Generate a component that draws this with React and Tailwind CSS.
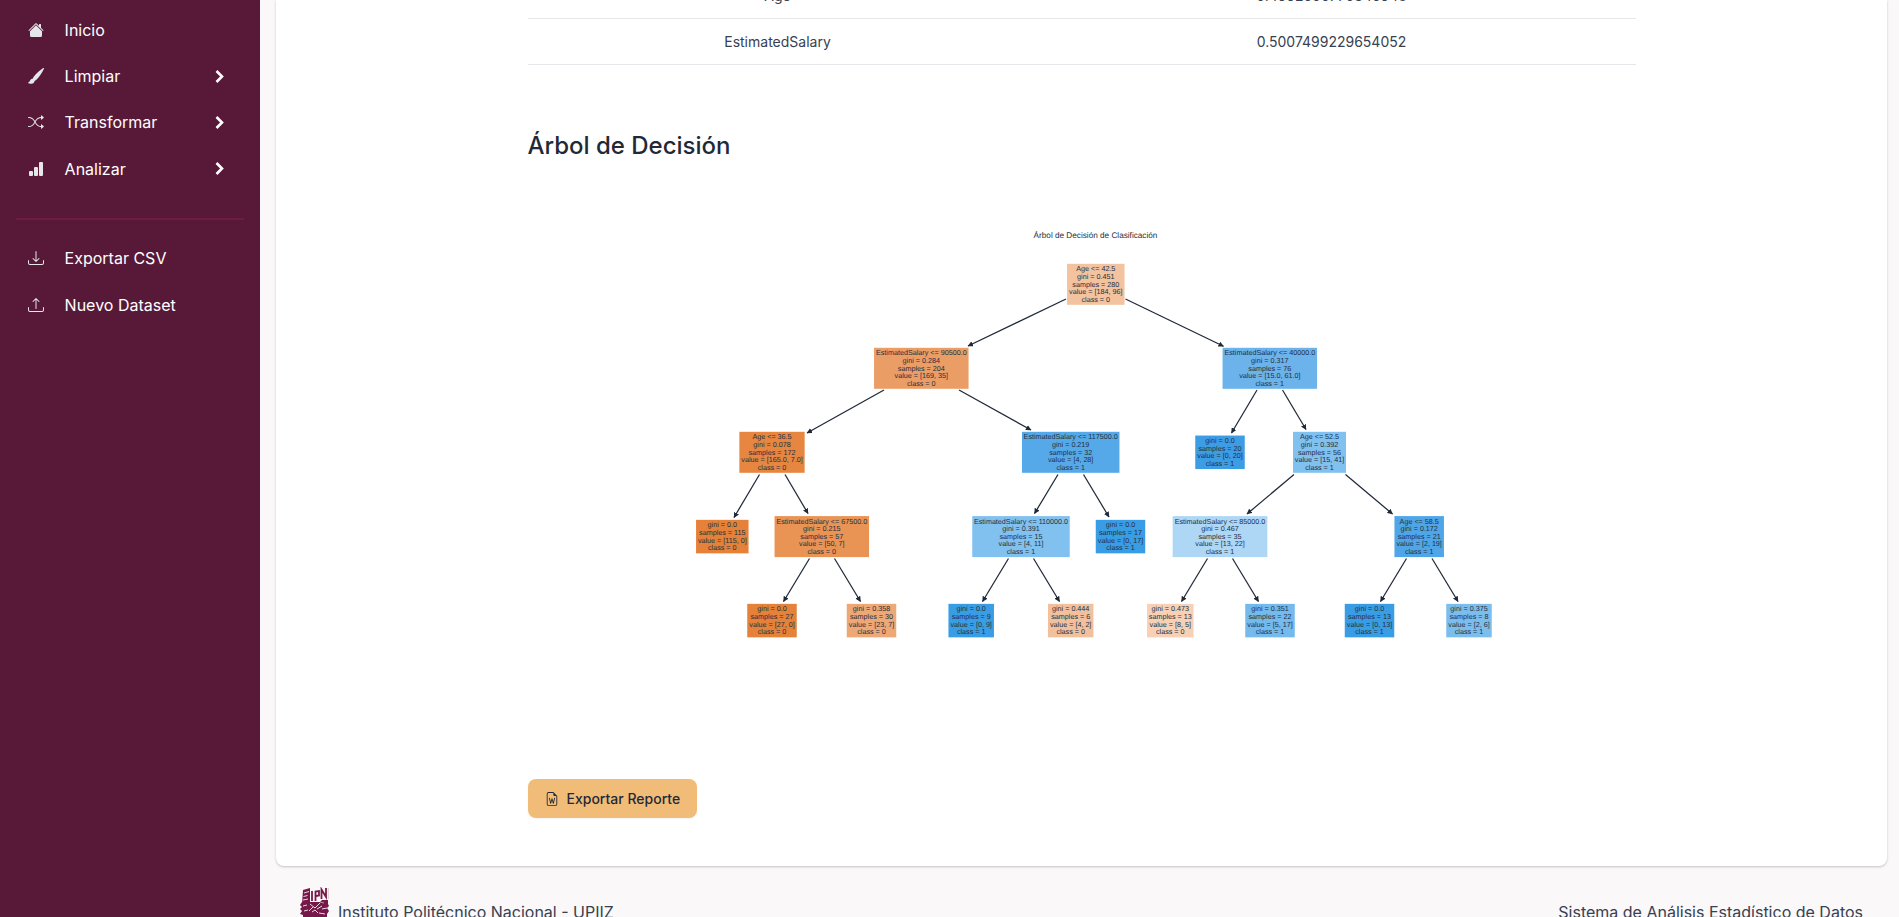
import { BsHouseFill, BsBrushFill, BsBarChartFill, BsShuffle, BsDownload, BsUpload, BsFileEarmarkWord } from "react-icons/bs";

const TREE = [
  // cx, cy, width, colour, lines
  [1095.8, 284.3, 57.5, "#f3c3a0", ["Age <= 42.5", "gini = 0.451", "samples = 280", "value = [184, 96]", "class = 0"]],
  [921.3, 368.3, 94.5, "#eb9d66", ["EstimatedSalary <= 90500.0", "gini = 0.284", "samples = 204", "value = [169, 35]", "class = 0"]],
  [1269.8, 368.3, 94.5, "#6bb3ea", ["EstimatedSalary <= 40000.0", "gini = 0.317", "samples = 76", "value = [15.0, 61.0]", "class = 1"]],
  [772, 452.3, 65.3, "#e68640", ["Age <= 36.5", "gini = 0.078", "samples = 172", "value = [165.0, 7.0]", "class = 0"]],
  [1070.7, 452.3, 97.5, "#55a9e9", ["EstimatedSalary <= 117500.0", "gini = 0.219", "samples = 32", "value = [4, 28]", "class = 1"]],
  [1220, 452.3, 49.5, "#3c9de5", ["gini = 0.0", "samples = 20", "value = [0, 20]", "class = 1"]],
  [1319.5, 452.3, 53, "#81c1ef", ["Age <= 52.5", "gini = 0.392", "samples = 56", "value = [15, 41]", "class = 1"]],
  [722.3, 536.6, 52.5, "#e58139", ["gini = 0.0", "samples = 115", "value = [115, 0]", "class = 0"]],
  [821.8, 536.6, 94.5, "#e99355", ["EstimatedSalary <= 67500.0", "gini = 0.215", "samples = 57", "value = [50, 7]", "class = 0"]],
  [1021, 536.6, 97.5, "#81c1f0", ["EstimatedSalary <= 110000.0", "gini = 0.391", "samples = 15", "value = [4, 11]", "class = 1"]],
  [1120.5, 536.6, 49.5, "#399de5", ["gini = 0.0", "samples = 17", "value = [0, 17]", "class = 1"]],
  [1220, 536.6, 94.7, "#aed7f5", ["EstimatedSalary <= 85000.0", "gini = 0.467", "samples = 35", "value = [13, 22]", "class = 1"]],
  [1419.2, 536.6, 49.5, "#4ea6e8", ["Age <= 58.5", "gini = 0.172", "samples = 21", "value = [2, 19]", "class = 1"]],
  [772, 620.6, 49.5, "#e58139", ["gini = 0.0", "samples = 27", "value = [27, 0]", "class = 0"]],
  [871.5, 620.6, 49.5, "#eda876", ["gini = 0.358", "samples = 30", "value = [23, 7]", "class = 0"]],
  [971.2, 620.6, 45.5, "#399de5", ["gini = 0.0", "samples = 9", "value = [0, 9]", "class = 1"]],
  [1070.7, 620.6, 45.5, "#f2c09c", ["gini = 0.444", "samples = 6", "value = [4, 2]", "class = 0"]],
  [1170.3, 620.6, 46.5, "#f7d0b5", ["gini = 0.473", "samples = 13", "value = [8, 5]", "class = 0"]],
  [1270, 620.6, 49.5, "#74baed", ["gini = 0.351", "samples = 22", "value = [5, 17]", "class = 1"]],
  [1369.5, 620.6, 49.5, "#399de5", ["gini = 0.0", "samples = 13", "value = [0, 13]", "class = 1"]],
  [1469, 620.6, 45.5, "#7bbeee", ["gini = 0.375", "samples = 8", "value = [2, 6]", "class = 1"]],
];

const EDGES = [
  [1066, 299, 968, 346], [1125.5, 299, 1223.5, 346.3],
  [884, 390, 807, 433], [959, 390, 1031, 430],
  [1257, 390, 1231.5, 433], [1282.5, 390, 1306, 429.5],
  [759.5, 474.5, 734, 517.5], [785, 474.5, 808, 513.5],
  [1058, 474.5, 1034.5, 513.5], [1083.5, 474.5, 1109, 517],
  [1294, 474.5, 1247, 514], [1345.5, 474.5, 1392.5, 514],
  [809.5, 558.5, 783.5, 601.5], [834.5, 558.5, 860.5, 601.5],
  [1008.5, 558.5, 982.5, 601.5], [1033.5, 558.5, 1059.5, 601.5],
  [1207.5, 558.5, 1181.5, 601.5], [1232.5, 558.5, 1258.5, 601.5],
  [1406.5, 558.5, 1380.5, 601.5], [1432, 558.5, 1458, 601.5],
];

function DecisionTree() {
  return (
    <svg className="block h-[560px] w-[1108px]" viewBox="528 192 1108 560" fontFamily='"Liberation Sans", Arial, sans-serif' fill="#263040" textRendering="geometricPrecision">
      <defs>
        <marker id="tip" viewBox="0 0 6 6" refX="5.5" refY="3" markerWidth="5.5" markerHeight="5.5" markerUnits="userSpaceOnUse" orient="auto">
          <path d="M0 0L6 3L0 6Z" fill="#202938" />
        </marker>
      </defs>
      <text x="1095.5" y="237.8" fontSize="8.2" textAnchor="middle">Árbol de Decisión de Clasificación</text>
      {EDGES.map(([x1, y1, x2, y2]) => (
        <line key={`${x1}-${y1}`} x1={x1} y1={y1} x2={x2} y2={y2} stroke="#202938" strokeWidth="1.25" markerEnd="url(#tip)" />
      ))}
      {TREE.map(([cx, cy, w, color, lines]) => {
        const h = lines.length === 5 ? 41 : 33.5;
        return (
          <g key={`${cx}-${cy}`}>
            <rect x={cx - w / 2} y={cy - h / 2} width={w} height={h} fill={color} />
            {lines.map((line, i) => (
              <text key={line} x={cx} y={cy + (i - (lines.length - 1) / 2) * 7.6 + 2.2} fontSize="7.2" textAnchor="middle">{line}</text>
            ))}
          </g>
        );
      })}
    </svg>
  );
}

function Chevron() {
  return (
    <svg className="ml-auto h-[13px] w-[9px]" viewBox="0 0 9 13" fill="none" stroke="white" strokeWidth="2.6">
      <path d="M1.500 1L7 6.500L1.500 12" />
    </svg>
  );
}

function NavItem({ icon, label, expandable }) {
  return (
    <a className="flex h-[46.400px] items-center pl-7 pr-9 text-base text-white">
      <span className="flex w-[36.6px] text-[#e5e7eb]">{icon}</span>
      <span>{label}</span>
      {expandable && <Chevron />}
    </a>
  );
}

function Crest() {
  return (
    <svg className="h-[50px] w-[30px]" viewBox="0 0 30 50" fill="#76184a">
      <path d="M3 3L10 1V17H2Z" />
      <path d="M2 15H20L22 13H28V17L29 19L27 21L29 24L27 27V38L15 49L3 38V28L0 27L2 24L0 22L2 20L0 18Z" />
      <path d="M12 4V14M15.500 14V4.500L19 4V8.500L16 9M21.500 12V2.500L26 10V1" fill="none" stroke="#76184a" strokeWidth="1.8" />
      <path d="M4 6l5-1.500M3.500 9.500l4-1M3 13l5-1M10 17l5 4 5-5M9 24l4-4M17 22l5-3M3 19l4-1M22 22l5-1M4 24l4-1M19 26l6 1M12 25l3-2 3 3" stroke="#e9dce0" strokeWidth="1" fill="none" />
      <path d="M28.300 1v11M20 15l4 1" stroke="#d3bfb4" strokeWidth=".8" fill="none" />
    </svg>
  );
}

export default function App() {
  return (
    <div className="flex h-[917px] overflow-hidden bg-[#faf8f9] font-['Inter',sans-serif]">
      <aside className="w-[260px] shrink-0 bg-[#581938] pt-[6.500px]">
        <nav>
          <NavItem icon={<BsHouseFill className="size-4" />} label="Inicio" />
          <NavItem icon={<BsBrushFill className="size-4" />} label="Limpiar" expandable />
          <NavItem icon={<BsShuffle className="size-4" />} label="Transformar" expandable />
          <NavItem icon={<BsBarChartFill className="size-4" />} label="Analizar" expandable />
        </nav>
        <hr className="mx-4 mt-[25.900px] mb-[15px] border-t-2 border-[#701a46]" />
        <nav>
          <NavItem icon={<BsDownload className="size-4" />} label="Exportar CSV" />
          <NavItem icon={<BsUpload className="size-4" />} label="Nuevo Dataset" />
        </nav>
      </aside>

      <div className="flex min-w-0 flex-1 flex-col pl-4 pr-3">
        <main className="h-[866px] shrink-0 rounded-b-lg bg-white pl-[251.500px] shadow-[0_1px_3px_rgba(0,0,0,0.13),0_1px_2px_rgba(0,0,0,0.1)]">
          <div className="w-[1108px] text-sm text-[#374151]">
            <div className="grid h-[19px] grid-cols-[500px_608px] overflow-hidden border-b border-[#e5e7eb] text-center">
              <span className="-mt-3.5 leading-5">Age</span>
              <span className="-mt-3.5 leading-5">0.4992500770345948</span>
            </div>
            <div className="grid h-[46px] grid-cols-[500px_608px] items-center border-b border-[#e5e7eb] text-center">
              <span>EstimatedSalary</span>
              <span>0.5007499229654052</span>
            </div>
          </div>
          <h2 className="mt-[65px] h-[62px] text-2xl font-medium text-[#1f2937]">Árbol de Decisión</h2>
          <DecisionTree />
          <button className="mt-[27px] flex h-[39px] w-[169px] items-center rounded-lg bg-[#f1bc77] pl-[17px] text-sm font-medium text-[#1f2937] shadow-xs">
            <BsFileEarmarkWord className="mr-[8px] size-3.5" />
            Exportar Reporte
          </button>
        </main>
        <footer className="mt-[21px] flex h-[50px] shrink-0 items-center justify-between pl-6 pr-6 text-base text-[#374151]">
          <div className="flex items-center gap-2">
            <Crest />
            <span>Instituto Politécnico Nacional - UPIIZ</span>
          </div>
          <span>Sistema de Análisis Estadístico de Datos</span>
        </footer>
      </div>
    </div>
  );
}
